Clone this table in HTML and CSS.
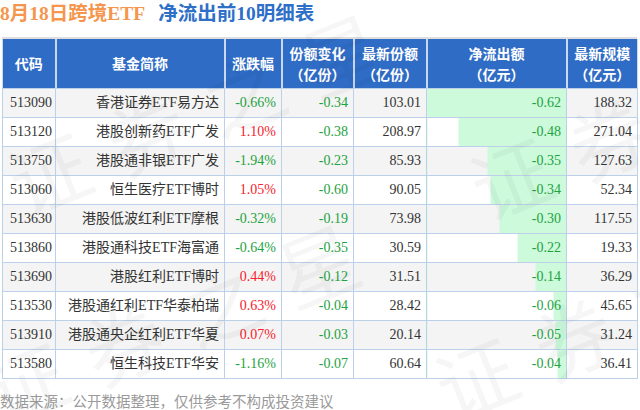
FILE: index.html
```html
<!DOCTYPE html>
<html lang="zh">
<head>
<meta charset="utf-8">
<link rel="stylesheet" href="styles.css">
</head>
<body>
<div class="page">
  <h1 class="title"><span class="t-orange">8月18日跨境ETF</span><span class="t-blue">净流出前10明细表</span></h1>
  <div class="table-wrap">
    <table class="grid">
      <colgroup>
        <col class="c1"><col class="c2"><col class="c3"><col class="c4"><col class="c5"><col class="c6"><col class="c7">
      </colgroup>
      <thead>
        <tr>
          <th>代码</th>
          <th>基金简称</th>
          <th>涨跌幅</th>
          <th>份额变化<br>（亿份）</th>
          <th>最新份额<br>（亿份）</th>
          <th>净流出额<br>（亿元）</th>
          <th>最新规模<br>（亿元）</th>
        </tr>
      </thead>
      <tbody>
        <tr><td class="code">513090</td><td class="name">香港证券ETF易方达</td><td class="down">-0.66%</td><td class="down">-0.34</td><td>103.01</td><td class="down bar" style="--w:100%">-0.62</td><td>188.32</td></tr>
        <tr><td class="code">513120</td><td class="name">港股创新药ETF广发</td><td class="up">1.10%</td><td class="down">-0.38</td><td>208.97</td><td class="down bar" style="--w:77.4%">-0.48</td><td>271.04</td></tr>
        <tr><td class="code">513750</td><td class="name">港股通非银ETF广发</td><td class="down">-1.94%</td><td class="down">-0.23</td><td>85.93</td><td class="down bar" style="--w:56.5%">-0.35</td><td>127.63</td></tr>
        <tr><td class="code">513060</td><td class="name">恒生医疗ETF博时</td><td class="up">1.05%</td><td class="down">-0.60</td><td>90.05</td><td class="down bar" style="--w:54.8%">-0.34</td><td>52.34</td></tr>
        <tr><td class="code">513630</td><td class="name">港股低波红利ETF摩根</td><td class="down">-0.32%</td><td class="down">-0.19</td><td>73.98</td><td class="down bar" style="--w:48.4%">-0.30</td><td>117.55</td></tr>
        <tr><td class="code">513860</td><td class="name">港股通科技ETF海富通</td><td class="down">-0.64%</td><td class="down">-0.35</td><td>30.59</td><td class="down bar" style="--w:35.5%">-0.22</td><td>19.33</td></tr>
        <tr><td class="code">513690</td><td class="name">港股红利ETF博时</td><td class="up">0.44%</td><td class="down">-0.12</td><td>31.51</td><td class="down bar" style="--w:22.6%">-0.14</td><td>36.29</td></tr>
        <tr><td class="code">513530</td><td class="name">港股通红利ETF华泰柏瑞</td><td class="up">0.63%</td><td class="down">-0.04</td><td>28.42</td><td class="down bar" style="--w:9.7%">-0.06</td><td>45.65</td></tr>
        <tr><td class="code">513910</td><td class="name">港股通央企红利ETF华夏</td><td class="up">0.07%</td><td class="down">-0.03</td><td>20.14</td><td class="down bar" style="--w:8.1%">-0.05</td><td>31.24</td></tr>
        <tr><td class="code">513580</td><td class="name">恒生科技ETF华安</td><td class="down">-1.16%</td><td class="down">-0.07</td><td>60.64</td><td class="down bar" style="--w:6.5%">-0.04</td><td>36.41</td></tr>
      </tbody>
    </table>
  </div>
  <p class="note">数据来源：公开数据整理，仅供参考不构成投资建议</p>
  <div class="watermark" aria-hidden="true">
    <span class="wm wm-a">证券之星</span>
    <span class="wm wm-b">证券之星</span>
    <span class="wm wm-c">证券之星</span>
    <span class="wm wm-d">证券之星</span>
  </div>
</div>
</body>
</html>
```

FILE: styles.css
```css
html, body {
  margin: 0;
  padding: 0;
  background: #ffffff;
}

.page {
  position: relative;
  width: 640px;
  height: 410px;
  overflow: hidden;
  font-family: "Liberation Serif", "Noto Sans CJK SC", serif;
}

.title {
  margin: 0 0 10px 0;
  height: 27px;
  line-height: 27px;
  font-size: 19.5px;
  font-weight: bold;
  white-space: nowrap;
  display: flex;
  gap: 13px;
}

.t-orange { color: #f4964d; }
.t-blue { color: #2e6fc8; }

.table-wrap {
  margin-left: 2px;
  width: 635px;
  border-top: 2px solid #dedede;
}

.grid {
  width: 635px;
  table-layout: fixed;
  border-collapse: collapse;
  font-size: 14px;
  color: #333333;
}

.c1 { width: 53px; }
.c2 { width: 169px; }
.c3 { width: 57px; }
.c4 { width: 72px; }
.c5 { width: 73px; }
.c6 { width: 140px; }
.c7 { width: 71px; }

.grid th {
  background: #2f6cc6;
  color: #ffffff;
  font-family: "Noto Sans CJK SC", sans-serif;
  font-weight: bold;
  font-size: 14px;
  line-height: 21px;
  height: 49px;
  padding: 0;
  text-align: center;
  border-left: 2px solid #c9d8ee;
  border-bottom: 1px solid #bcd0ea;
}

.grid th:first-child { border-left: 1px solid #c9d8ee; }
.grid th:last-child { border-right: 1px solid #c9d8ee; }

.grid td {
  height: 28px;
  padding: 0 5px 0 4px;
  text-align: right;
  border: 1px solid #bcd1e9;
  white-space: nowrap;
  line-height: 20px;
}

.grid tbody tr:nth-child(odd) td { background-color: #f4f4f4; }
.grid tbody tr:nth-child(even) td { background-color: #ffffff; }

.grid td.code {
  text-align: left;
  padding-left: 7px;
}

.grid td.bar {
  background-image: linear-gradient(to left, #ccfadb var(--w), transparent var(--w));
}

.down { color: #1ea33f; }
.up { color: #f5222d; }

.note {
  margin: 12px 0 0 0;
  font-family: "Noto Sans CJK SC", sans-serif;
  font-size: 14.5px;
  line-height: 20px;
  color: #9a9a9a;
  white-space: nowrap;
}

.watermark {
  position: absolute;
  left: 0;
  top: 0;
  width: 640px;
  height: 410px;
  pointer-events: none;
}

.wm {
  position: absolute;
  font-family: "Noto Sans CJK SC", sans-serif;
  font-size: 80px;
  line-height: 80px;
  letter-spacing: 25px;
  color: rgba(0, 0, 0, 0.035);
  white-space: nowrap;
  transform-origin: 40px 40px;
  transform: rotate(-22deg);
}

.wm-a { left: 8px; top: 130px; }
.wm-b { left: -15px; top: 340px; }
.wm-c { left: 470px; top: 135px; }
.wm-d { left: 435px; top: 335px; }
```
